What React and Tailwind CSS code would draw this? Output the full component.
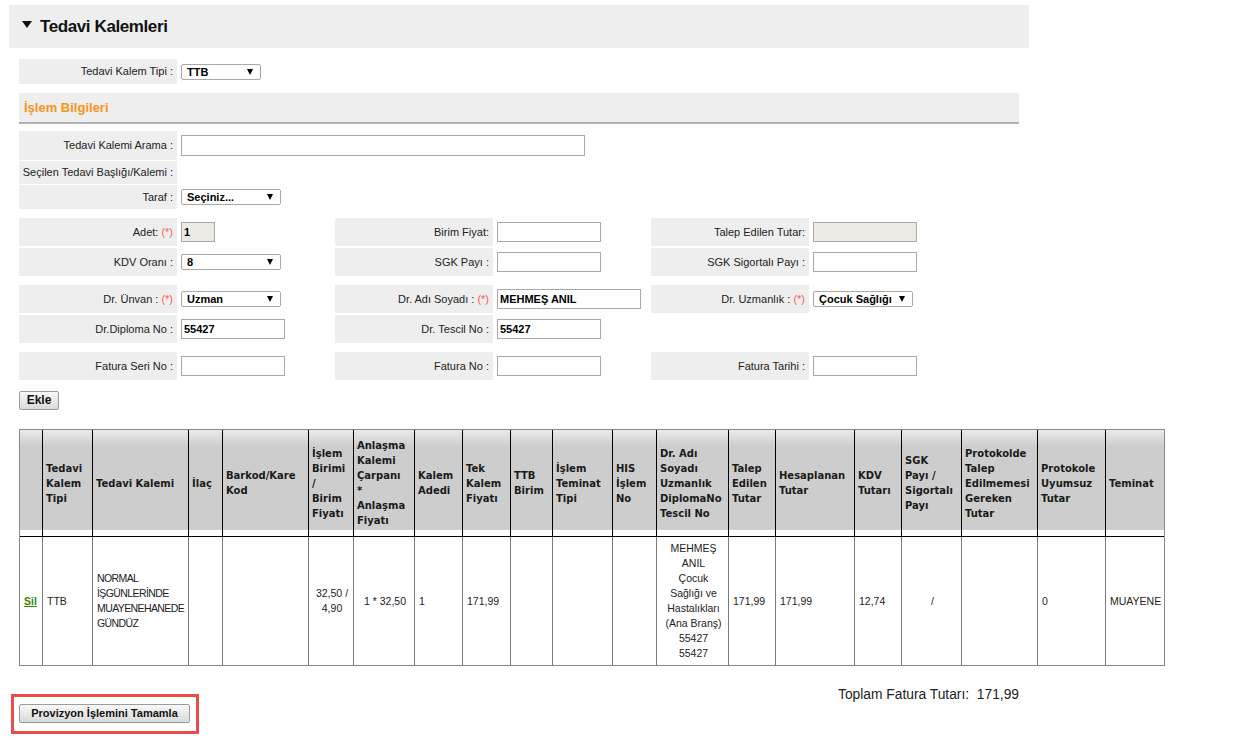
import React from "react";

const labelCls =
  "w-[158px] shrink-0 h-full bg-[#eeeeee] flex items-center justify-end pr-[4px] whitespace-nowrap";

const Req = () => <span className="text-[#ff5a5a] ml-[3px]">(*)</span>;

function Select({ value, w }) {
  return (
    <div className={`relative h-[16px] border border-[#a9a9a9] rounded-[2px] bg-white ${w}`}>
      <span className="block pl-[5px] pr-[16px] leading-[14px] font-bold text-black whitespace-nowrap overflow-hidden">
        {value}
      </span>
      <svg width="6" height="6" viewBox="0 0 6 6" className="absolute right-[7px] top-[4px]">
        <polygon points="0,0 6,0 3,6" fill="#000" />
      </svg>
    </div>
  );
}

function Input({ w = "w-[104px]", value = "", gray = false, h = "h-[20px]" }) {
  return (
    <input
      readOnly
      value={value}
      className={`${w} ${h} border border-[#a9a9a9] pl-[2px] font-bold text-black outline-none ${
        gray ? "bg-[#ebebe4]" : "bg-white"
      }`}
    />
  );
}

function Group({ label, children }) {
  return (
    <div className="flex w-[316px] h-full">
      <div className={labelCls}>{label}</div>
      <div className="pl-[4px] flex items-center">{children}</div>
    </div>
  );
}

const cols = [23, 50, 96, 34, 86, 45, 61, 48, 48, 42, 60, 44, 72, 47, 79, 47, 60, 76, 68, 58];

const headers = [
  [""],
  ["Tedavi", "Kalem", "Tipi"],
  ["Tedavi Kalemi"],
  ["İlaç"],
  ["Barkod/Kare", "Kod"],
  ["İşlem", "Birimi", "/", "Birim", "Fiyatı"],
  ["Anlaşma", "Kalemi", "Çarpanı", "*", "Anlaşma", "Fiyatı"],
  ["Kalem", "Adedi"],
  ["Tek", "Kalem", "Fiyatı"],
  ["TTB", "Birim"],
  ["İşlem", "Teminat", "Tipi"],
  ["HIS", "İşlem", "No"],
  ["Dr. Adı", "Soyadı", "Uzmanlık", "DiplomaNo", "Tescil No"],
  ["Talep", "Edilen", "Tutar"],
  ["Hesaplanan", "Tutar"],
  ["KDV", "Tutarı"],
  ["SGK", "Payı /", "Sigortalı", "Payı"],
  ["Protokolde", "Talep", "Edilmemesi", "Gereken", "Tutar"],
  ["Protokole", "Uyumsuz", "Tutar"],
  ["Teminat"],
];

const Lines = ({ lines }) =>
  lines.map((l, i) => (
    <React.Fragment key={i}>
      {i > 0 && <br />}
      {l}
    </React.Fragment>
  ));

export default function App() {
  const thCls =
    "h-[107px] px-[3px] text-left align-middle font-['DejaVu_Sans',sans-serif] font-bold text-[10px] leading-[15px] text-[#1a1a1a] border-b border-black bg-[linear-gradient(to_bottom,#ebebeb_0px,#cdcdcd_16px,#cdcdcd_100px,#ffffff_100px)]";
  const tdCls = "h-[128px] pl-[4px] pr-[2px] align-middle border-[#7a7a7a]";

  const body = [
    { c: <a className="font-bold text-[#338800] underline">Sil</a>, cls: "pl-[3px]" },
    { c: "TTB" },
    { c: <Lines lines={["NORMAL", "İŞGÜNLERİNDE", "MUAYENEHANEDE", "GÜNDÜZ"]} />, cls: "tracking-[-0.6px] pl-[3px]" },
    { c: "" },
    { c: "" },
    { c: <Lines lines={["32,50 /", "4,90"]} />, cls: "text-center" },
    { c: "1 * 32,50", cls: "text-center" },
    { c: "1" },
    { c: "171,99" },
    { c: "" },
    { c: "" },
    { c: "" },
    {
      c: (
        <Lines
          lines={["MEHMEŞ", "ANIL", "Çocuk", "Sağlığı ve", "Hastalıkları", "(Ana Branş)", "55427", "55427"]}
        />
      ),
      cls: "text-center",
    },
    { c: "171,99" },
    { c: "171,99" },
    { c: "12,74" },
    { c: "/", cls: "text-center" },
    { c: "" },
    { c: "0" },
    { c: "MUAYENE" },
  ];

  return (
    <div className="min-h-screen bg-white pt-[5px] pl-[9px] text-[11px] text-[#222] font-['Liberation_Sans',Arial,sans-serif]">
      <div className="w-[1020px] h-[43px] bg-[#eeeeee] flex items-center pl-[13px]">
        <svg width="10" height="7" viewBox="0 0 10 7" className="-mt-[5px]">
          <polygon points="0,0 10,0 5,7" fill="#111" />
        </svg>
        <h2 className="ml-[8px] text-[17px] font-bold tracking-[-0.4px] text-[#111]">Tedavi Kalemleri</h2>
      </div>

      <div className="pl-[10px]">
        <div className="mt-[11px] flex h-[25px]">
          <Group label="Tedavi Kalem Tipi :">
            <Select value="TTB" w="w-[80px]" />
          </Group>
        </div>

        <div className="mt-[9px] w-[1000px] h-[31px] bg-[#eeeeee] border-b-2 border-[#b0b0b0] flex items-center pl-[5px] text-[13px] font-bold text-[#f7941d]">
          İşlem Bilgileri
        </div>

        <div className="mt-[7px] flex h-[29px]">
          <div className={labelCls}>Tedavi Kalemi Arama :</div>
          <div className="pl-[4px] flex items-center">
            <Input w="w-[404px]" h="h-[21px]" />
          </div>
        </div>
        <div className="mt-[1px] flex h-[23px]">
          <div className={labelCls}>Seçilen Tedavi Başlığı/Kalemi :</div>
        </div>
        <div className="mt-[1px] flex h-[24px]">
          <Group label="Taraf :">
            <Select value="Seçiniz..." w="w-[100px]" />
          </Group>
        </div>

        <div className="mt-[9px] flex flex-col gap-[2px]">
          <div className="flex h-[28px]">
            <Group label={<>Adet:<Req /></>}>
              <Input w="w-[34px]" value="1" gray />
            </Group>
            <Group label="Birim Fiyat:">
              <Input />
            </Group>
            <Group label="Talep Edilen Tutar:">
              <Input gray />
            </Group>
          </div>
          <div className="flex h-[28px]">
            <Group label="KDV Oranı :">
              <Select value="8" w="w-[100px]" />
            </Group>
            <Group label="SGK Payı :">
              <Input />
            </Group>
            <Group label="SGK Sigortalı Payı :">
              <Input />
            </Group>
          </div>
        </div>

        <div className="mt-[9px] flex flex-col gap-[2px]">
          <div className="flex h-[28px]">
            <Group label={<>Dr. Ünvan :<Req /></>}>
              <Select value="Uzman" w="w-[100px]" />
            </Group>
            <Group label={<>Dr. Adı Soyadı :<Req /></>}>
              <Input w="w-[144px]" value="MEHMEŞ ANIL" />
            </Group>
            <Group label={<>Dr. Uzmanlık :<Req /></>}>
              <Select value="Çocuk Sağlığı" w="w-[100px]" />
            </Group>
          </div>
          <div className="flex h-[28px]">
            <Group label="Dr.Diploma No :">
              <Input value="55427" />
            </Group>
            <Group label="Dr. Tescil No :">
              <Input value="55427" />
            </Group>
          </div>
        </div>

        <div className="mt-[9px] flex h-[28px]">
          <Group label="Fatura Seri No :">
            <Input />
          </Group>
          <Group label="Fatura No :">
            <Input />
          </Group>
          <Group label="Fatura Tarihi :">
            <Input />
          </Group>
        </div>

        <button className="mt-[11px] block w-[40px] h-[19px] border border-[#9c9c9c] rounded-[2px] bg-linear-to-b from-[#f8f8f8] to-[#dadada] text-[12px] font-bold leading-[17px] text-[#111]">
          Ekle
        </button>

        <table className="mt-[19px] w-[1146px] table-fixed border-separate border-spacing-0 border border-[#888888]">
          <colgroup>
            {cols.map((w, i) => (
              <col key={i} style={{ width: w }} />
            ))}
          </colgroup>
          <thead>
            <tr>
              {headers.map((h, i) => (
                <th key={i} className={`${thCls} ${i < headers.length - 1 ? "border-r" : ""}`}>
                  <Lines lines={h} />
                </th>
              ))}
            </tr>
          </thead>
          <tbody>
            <tr>
              {body.map((b, i) => (
                <td
                  key={i}
                  className={`${tdCls} text-[10.5px] leading-[15px] ${i < body.length - 1 ? "border-r" : ""} ${b.cls || ""}`}
                >
                  {b.c}
                </td>
              ))}
            </tr>
          </tbody>
        </table>

        <div className="mt-[21px] w-[1000px] flex justify-between items-start">
          <div className="-ml-[8px] mt-[7px] w-[188px] h-[40px] border-[3px] border-[#e84c4c] pl-[5px] pt-[7px]">
            <button className="block w-[171px] h-[19px] border border-[#9c9c9c] rounded-[2px] bg-linear-to-b from-[#f8f8f8] to-[#dadada] text-[11px] font-bold leading-[17px] text-[#111]">
              Provizyon İşlemini Tamamla
            </button>
          </div>
          <div className="text-[13.8px] leading-[16px] text-[#222]">
            Toplam Fatura Tutarı:&nbsp;&nbsp;171,99
          </div>
        </div>
      </div>
    </div>
  );
}
